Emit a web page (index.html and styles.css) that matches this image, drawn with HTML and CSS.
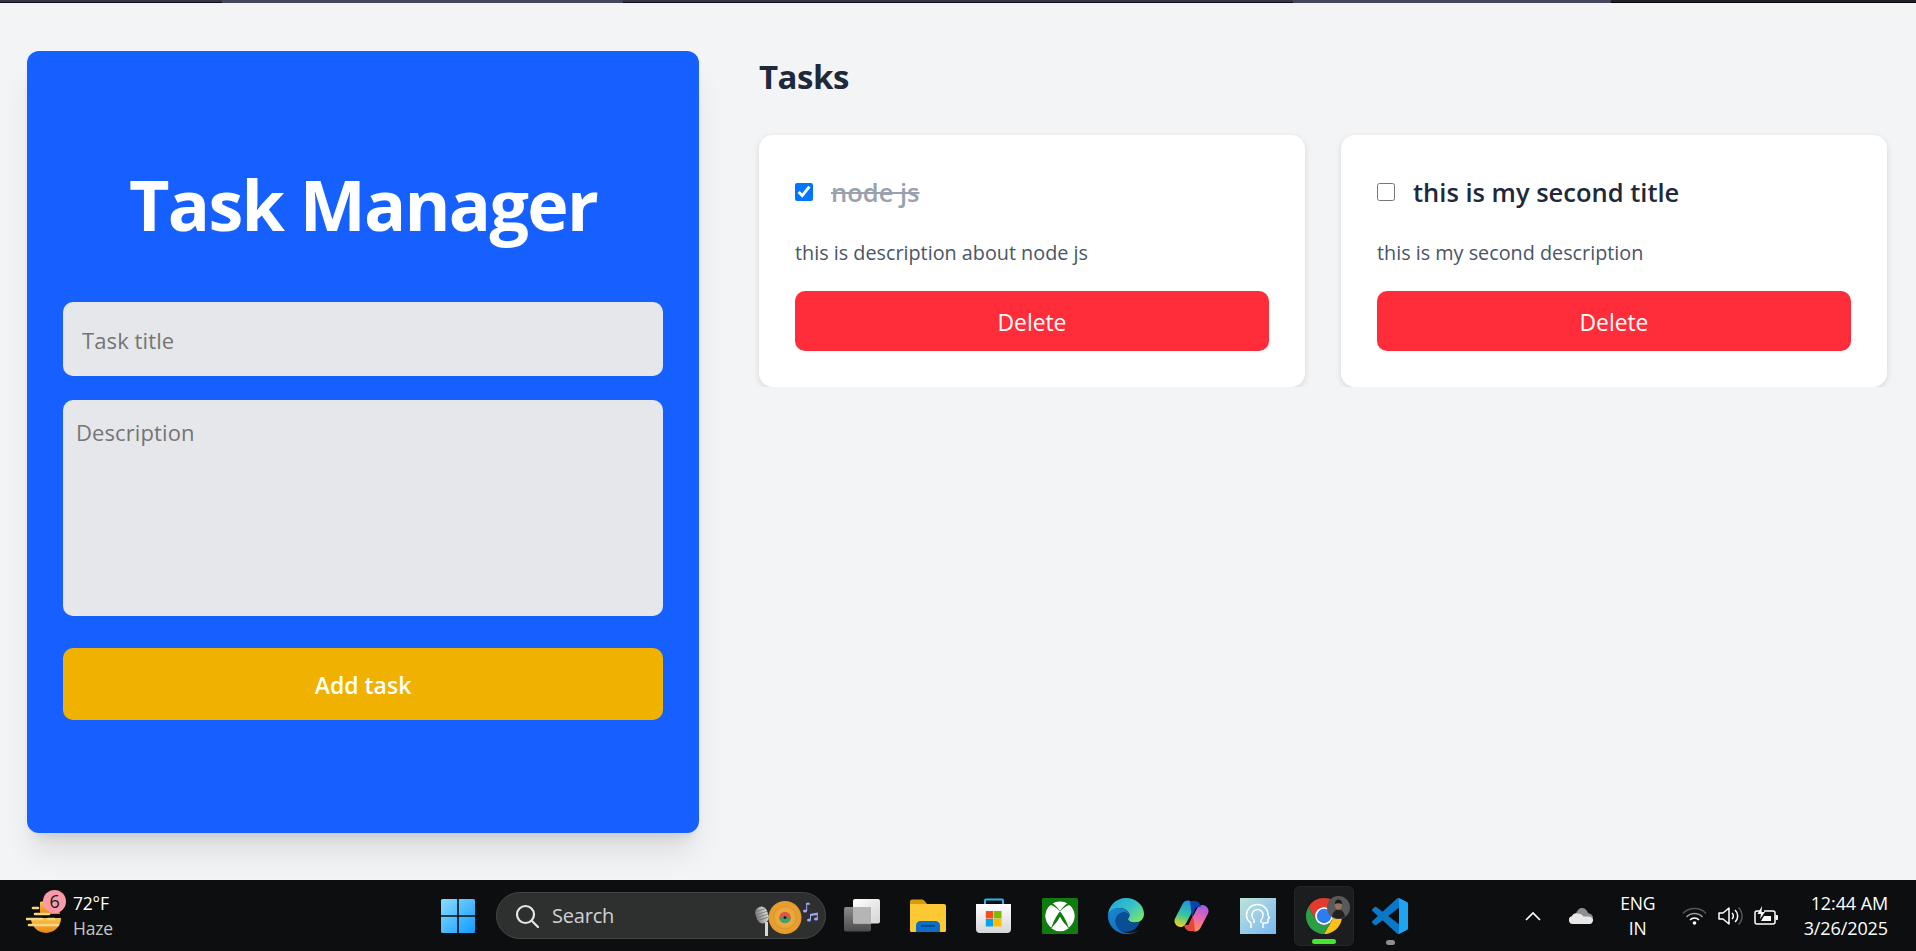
FILE: index.html
```html
<!DOCTYPE html>
<html lang="en">
<head>
<meta charset="UTF-8" />
<title>Task Manager</title>
<link rel="stylesheet" href="styles.css">
</head>
<body>

<div class="top-strip">
  <span class="strip-seg seg-a"></span>
  <span class="strip-seg seg-b seg-mark"></span>
  <span class="strip-seg seg-c"></span>
  <span class="strip-seg seg-b seg-d"></span>
  <span class="strip-seg seg-e"></span>
</div>

<div class="app">
  <aside class="sidebar">
    <h1>Task Manager</h1>
    <form class="task-form">
      <input type="text" placeholder="Task title" />
      <textarea placeholder="Description"></textarea>
      <button type="button" class="add-btn">Add task</button>
    </form>
  </aside>

  <main class="tasks">
    <h2>Tasks</h2>
    <div class="task-grid">
      <div class="task-card">
        <div class="task-head">
          <input type="checkbox" checked />
          <h3 class="done">node js</h3>
        </div>
        <p>this is description about node js</p>
        <button type="button" class="delete-btn">Delete</button>
      </div>
      <div class="task-card">
        <div class="task-head">
          <input type="checkbox" />
          <h3>this is my second title</h3>
        </div>
        <p>this is my second description</p>
        <button type="button" class="delete-btn">Delete</button>
      </div>
    </div>
  </main>
</div>

<footer class="taskbar">
  <div class="weather">
    <div class="weather-icon">
      <svg width="38" height="36" viewBox="0 0 38 36">
        <defs>
          <linearGradient id="sun" x1="0" y1="0" x2="0" y2="1">
            <stop offset="0" stop-color="#f7c64a"/>
            <stop offset="1" stop-color="#ee8413"/>
          </linearGradient>
        </defs>
        <path d="M5 20h30a15 15 0 0 1-30 0z" fill="url(#sun)"/>
        <path d="M14 4a15 15 0 0 1 20 12H14z" fill="url(#sun)"/>
        <g stroke="#f3d789" stroke-width="2.600" stroke-linecap="round">
          <path d="M7 10h5"/><path d="M9 16h14"/><path d="M1 21h15"/><path d="M22 21h6"/><path d="M3 27h29"/>
        </g>
      </svg>
      <span class="badge">6</span>
    </div>
    <div class="weather-text">
      <span>72°F</span>
      <span class="haze">Haze</span>
    </div>
  </div>

  <div class="apps">
    <div class="slot">
      <svg width="36" height="36" viewBox="0 0 36 36">
        <defs>
          <linearGradient id="win" x1="0" y1="0" x2="1" y2="1">
            <stop offset="0" stop-color="#8adcff"/>
            <stop offset="1" stop-color="#0f9bff"/>
          </linearGradient>
        </defs>
        <path d="M1 2.500A1.500 1.500 0 0 1 2.500 1H17.200v16.200H1zM18.800 1h14.700A1.500 1.500 0 0 1 35 2.500v14.700H18.800zM1 18.800h16.200V35H2.500A1.500 1.500 0 0 1 1 33.500zM18.800 18.800H35v14.700a1.500 1.500 0 0 1-1.500 1.500H18.800z" fill="url(#win)"/>
      </svg>
    </div>

    <div class="search-pill">
      <svg class="search-icon" width="24" height="24" viewBox="0 0 24 24" fill="none" stroke="#e6e6e6" stroke-width="2.200" stroke-linecap="round">
        <circle cx="10.500" cy="10.500" r="8.500"/><path d="M17 17l6 6"/>
      </svg>
      <span class="search-label">Search</span>
      <svg class="search-art" width="66" height="40" viewBox="0 0 66 40">
        <defs>
          <radialGradient id="disc">
            <stop offset="0" stop-color="#f4b54a"/>
            <stop offset="1" stop-color="#e39a2a"/>
          </radialGradient>
          <linearGradient id="mic" x1="0" y1="0" x2="1" y2="0">
            <stop offset="0" stop-color="#7d7d7d"/>
            <stop offset="1" stop-color="#e0e0e0"/>
          </linearGradient>
        </defs>
        <path d="M12 26h3v14h-3z" fill="#d6d6d6"/>
        <g transform="rotate(-18 9 19)">
          <rect x="3" y="10.500" width="12" height="17" rx="6" fill="url(#mic)"/>
          <path d="M3.500 14h11M3 17h12M3 20h12M3.500 23h11" stroke="#6c6c6c" stroke-width=".7"/>
        </g>
        <circle cx="32" cy="21.500" r="16.500" fill="url(#disc)"/>
        <circle cx="32" cy="21.500" r="11.500" fill="none" stroke="#d08a26" stroke-width=".6"/>
        <circle cx="32" cy="21.500" r="5.800" fill="#d9594a"/>
        <path d="M26.200 21.500h11.600a5.800 5.800 0 0 1-11.600 0z" fill="#3fa46c"/>
        <circle cx="32" cy="21.500" r="1.500" fill="#222"/>
        <g fill="#a2a8f2">
          <ellipse cx="52" cy="15" rx="2" ry="1.500"/>
          <path d="M53.200 7h1v8h-1z"/>
          <path d="M53.200 7c1.500-.5 2.500-.5 3.500 0v2c-1-.5-2-.5-3.500 0z"/>
          <ellipse cx="56" cy="24" rx="2" ry="1.500"/>
          <ellipse cx="63" cy="23" rx="2" ry="1.500"/>
          <path d="M57 18l7.800-1.500v6.500h-1v-4l-5.800 1.100V24h-1z"/>
        </g>
      </svg>
    </div>

    <div class="slot">
      <svg width="36" height="34" viewBox="0 0 36 34">
        <defs>
          <linearGradient id="tv-back" x1="0" y1="0" x2="0" y2="1">
            <stop offset="0" stop-color="#8a8a8a"/>
            <stop offset="1" stop-color="#4c4c4c"/>
          </linearGradient>
          <linearGradient id="tv-front" x1="0" y1="0" x2="1" y2="1">
            <stop offset="0" stop-color="#ffffff"/>
            <stop offset="1" stop-color="#d4d4d4"/>
          </linearGradient>
        </defs>
        <rect x="0" y="8" width="27" height="24.500" rx="2" fill="url(#tv-back)"/>
        <rect x="9" y="0" width="27" height="24.500" rx="2" fill="url(#tv-front)"/>
        <rect x="9" y="8" width="18" height="16.500" fill="#b5b5b5"/>
      </svg>
    </div>

    <div class="slot">
      <svg width="36" height="34" viewBox="0 0 36 34">
        <path d="M0 2.500A2 2 0 0 1 2 .500h10c1.500 0 2 .8 3 2l2.500 3H0z" fill="#d99a0a"/>
        <path d="M0 5h34a2 2 0 0 1 2 2v24.500a1.500 1.500 0 0 1-1.500 1.500h-33A1.500 1.500 0 0 1 0 31.500z" fill="#fcc934"/>
        <path d="M6 33v-6.500A4.500 4.500 0 0 1 10.500 22h15a4.500 4.500 0 0 1 4.500 4.500V33z" fill="#0c6ec4"/>
        <rect x="11" y="26" width="14" height="1.600" fill="#06447e"/>
      </svg>
    </div>

    <div class="slot">
      <svg width="36" height="36" viewBox="0 0 36 36">
        <defs>
          <linearGradient id="bag" x1="0" y1="0" x2="0" y2="1">
            <stop offset="0" stop-color="#ffffff"/>
            <stop offset="1" stop-color="#d6d6d6"/>
          </linearGradient>
        </defs>
        <path d="M9 7V2.500A1 1 0 0 1 10 1.500h16a1 1 0 0 1 1 1V7" fill="none" stroke="#29b6f6" stroke-width="2"/>
        <path d="M0 6h35v25a4 4 0 0 1-4 4H4a4 4 0 0 1-4-4z" fill="url(#bag)"/>
        <rect x="9.800" y="13" width="7.500" height="7.500" fill="#f25022"/>
        <rect x="18" y="13" width="7.500" height="7.500" fill="#7fba00"/>
        <rect x="9.800" y="21" width="7.500" height="7.500" fill="#00a4ef"/>
        <rect x="18" y="21" width="7.500" height="7.500" fill="#ffb900"/>
      </svg>
    </div>

    <div class="slot">
      <svg width="36" height="36" viewBox="0 0 36 36">
        <rect width="36" height="36" rx="1.500" fill="#107c10"/>
        <circle cx="18" cy="18" r="14.500" fill="#fff"/>
        <path d="M7 5c5 2 15 13 19 28M29 5C24 7 14 18 10 33" fill="none" stroke="#107c10" stroke-width="3.200"/>
        <path d="M18 21c3 2.500 7 7 8.500 9.500a14.500 14.500 0 0 1-17 0C11 28 15 23.500 18 21z" fill="#fff"/>
        <path d="M3.500 18A14.500 14.500 0 0 1 9 7c3 1 6 3.500 9 6.500-4 4-8 9-10 13-2-2.500-4.500-5-4.500-8.500z" fill="#fff"/>
        <path d="M32.500 18A14.500 14.500 0 0 0 27 7c-3 1-6 3.500-9 6.500 4 4 8 9 10 13 2-2.500 4.500-5 4.500-8.500z" fill="#fff"/>
      </svg>
    </div>

    <div class="slot">
      <svg width="36" height="36" viewBox="0 0 36 36">
        <defs>
          <linearGradient id="edge-top" x1="0" y1="0" x2="1" y2=".8">
            <stop offset="0" stop-color="#1fa3dc"/>
            <stop offset=".55" stop-color="#35c1c8"/>
            <stop offset="1" stop-color="#7ee66a"/>
          </linearGradient>
          <linearGradient id="edge-low" x1="0" y1="0" x2="1" y2="1">
            <stop offset="0" stop-color="#1a8ad8"/>
            <stop offset="1" stop-color="#0c5fa8"/>
          </linearGradient>
        </defs>
        <path d="M18 0c10 0 18 7 18 16 0 5-4 8.500-9 8.500-4 0-7-1.500-7-3.500 0-1 1.500-2 1.500-4 0-3-4-7-10-7C5.500 10 0 14 0 18 0 8 8 0 18 0z" fill="url(#edge-top)"/>
        <path d="M0 18c0-5 5.500-8 11-8 6 0 10.500 4 10.500 7-2-2-5-3-8-2-5 1.500-7 7-5 12 2 5 7 8 12 8 4 0 8-1 11-3-3.500 2.600-7.500 4-13 4C8 36 0 28 0 18z" fill="url(#edge-low)"/>
        <path d="M21.500 17c0 1.500-1.500 3-1.500 4 0 2 3 3.500 7 3.500 3 0 3.500 0 5-1-2.500 7-8 10.500-14 10.500-5 0-8-3-9.500-6.500-2-5 0-11 5-12.500 3-1 6 0 8 2z" fill="#0a4f96"/>
      </svg>
    </div>

    <div class="slot">
      <svg width="36" height="32" viewBox="0 0 36 32">
        <defs>
          <linearGradient id="cop-l" gradientUnits="userSpaceOnUse" x1="15" y1="0" x2="6" y2="27">
            <stop offset="0" stop-color="#1c8fe8"/>
            <stop offset=".55" stop-color="#35c6a0"/>
            <stop offset="1" stop-color="#f2d21e"/>
          </linearGradient>
          <linearGradient id="cop-r" gradientUnits="userSpaceOnUse" x1="29" y1="5" x2="20" y2="32">
            <stop offset="0" stop-color="#a35be8"/>
            <stop offset=".55" stop-color="#f06aa8"/>
            <stop offset="1" stop-color="#fb9a3c"/>
          </linearGradient>
        </defs>
        <path d="M14 6.500L6.500 21" stroke="url(#cop-l)" stroke-width="12" stroke-linecap="round"/>
        <path d="M28.500 11L21 25.500" stroke="url(#cop-r)" stroke-width="12" stroke-linecap="round"/>
        <path d="M16 1h5c3 0 5 2 6 6h-3c-2 0-2.500 1-3.200 3L18 17z" fill="#0c3fb0"/>
        <path d="M21 31h-5c-3 0-5-2-6-6h3c2 0 2.500-1 3.200-3L19 15z" fill="#e8453c"/>
      </svg>
    </div>

    <div class="slot">
      <svg width="36" height="36" viewBox="0 0 36 36">
        <defs>
          <linearGradient id="head-bg" x1="0" y1="0" x2="1" y2="1">
            <stop offset="0" stop-color="#bde3da"/>
            <stop offset="1" stop-color="#78b7f2"/>
          </linearGradient>
        </defs>
        <rect width="36" height="36" fill="url(#head-bg)"/>
        <g fill="none" stroke="#fff" stroke-width="1.500" stroke-linejoin="round">
          <path d="M11 30v-5c-3-2-4.500-5-4.500-8 0-6 5-10.500 11-10.500s10.500 4.500 10.500 10c0 1 .5 2 1.500 3.500l-1.500 1v2.500c0 1-1 1.500-2 1.500h-3v5"/>
          <path d="M14 25v-3c-1.500-1-2-3-2-5 0-3 2.500-5.500 5.500-5.500S23 14 23 17c0 2-.5 4-2 5v3"/>
        </g>
      </svg>
    </div>

    <div class="slot slot-active">
      <svg width="36" height="36" viewBox="0 0 44 44">
        <path d="M22 0A22 22 0 0 1 41.050 11H22A11 11 0 0 0 12.470 27.500L2.950 11A22 22 0 0 1 22 0z" fill="#e33b2e"/>
        <path d="M41.050 11H22A11 11 0 0 1 31.530 27.500L22 44A22 22 0 0 0 41.050 11z" fill="#fbc116"/>
        <path d="M2.950 11L12.470 27.500A11 11 0 0 0 31.530 27.500L22 44A22 22 0 0 1 2.950 11z" fill="#2b9f46"/>
        <circle cx="22" cy="22" r="11" fill="#fff"/>
        <circle cx="22" cy="22" r="8.800" fill="#2f7bf0"/>
      </svg>
      <span class="avatar">
        <svg width="23" height="23" viewBox="0 0 23 23">
          <circle cx="11.500" cy="11.500" r="11.500" fill="#595959"/>
          <path d="M5 20.500c1-5 3.500-7 6.500-7s5.500 2 6.500 7a11.500 11.500 0 0 1-13 0z" fill="#232221"/>
          <ellipse cx="11.500" cy="9.500" rx="3.400" ry="4.200" fill="#94765f"/>
          <path d="M7.800 8c0-3 1.800-4.500 3.700-4.500s3.700 1.500 3.700 4.500c-2-1-5.400-1-7.400 0z" fill="#1a1a1a"/>
        </svg>
      </span>
      <span class="run-pill run-green"></span>
    </div>

    <div class="slot">
      <svg width="36" height="36" viewBox="0 0 24 24">
        <path d="M23.150 2.587L18.210.210a1.494 1.494 0 0 0-1.705.290l-9.460 8.630-4.120-3.128a.999.999 0 0 0-1.276.057L.327 7.261A1 1 0 0 0 .326 8.740L3.899 12 .326 15.260a1 1 0 0 0 .001 1.479L1.650 17.940a.999.999 0 0 0 1.276.057l4.120-3.128 9.460 8.630a1.492 1.492 0 0 0 1.704.290l4.942-2.377A1.500 1.500 0 0 0 24 20.060V3.939a1.500 1.500 0 0 0-.85-1.352zm-5.146 14.861L10.826 12l7.178-5.448v10.896z" fill="#0a78c8"/>
        <path d="M18 .1l.21.110 4.940 2.377A1.500 1.500 0 0 1 24 3.939V20.060a1.500 1.500 0 0 1-.85 1.352l-4.940 2.377-.21.110z" fill="#1fa4f2"/>
      </svg>
      <span class="run-pill run-gray"></span>
    </div>
  </div>

  <div class="tray">
    <svg class="tray-caret" width="16" height="10" viewBox="0 0 16 10" fill="none" stroke="#fff" stroke-width="1.700">
      <path d="M1 9l7-7 7 7"/>
    </svg>
    <svg class="tray-cloud" width="24" height="16" viewBox="0 0 24 16">
      <path d="M7 5.500C8 2 10.500 0 13 0c3 0 5 2 6 5 3 .5 5 2.500 5 5H7z" fill="#8f8f8f"/>
      <path d="M4 16a4 4 0 0 1-1-7.900C4 6 6 5 8 5.500c2-.5 5 .5 6.500 3 4 0 8.500-.5 9.500 2.500.5 2-1 5-3 5z" fill="#e8e8e8"/>
    </svg>
    <div class="lang"><span>ENG</span><span>IN</span></div>
    <div class="status-icons">
      <svg width="25" height="18" viewBox="0 0 25 18" fill="none" stroke-width="1.500">
        <path d="M1 6.500a16 16 0 0 1 23 0" stroke="#555"/>
        <path d="M4.500 10a11 11 0 0 1 16 0" stroke="#999"/>
        <path d="M8 13a6 6 0 0 1 9 0" stroke="#fff"/>
        <circle cx="12.500" cy="16" r="1.800" fill="#fff"/>
      </svg>
      <svg width="25" height="20" viewBox="0 0 25 20" fill="none" stroke-width="1.500">
        <path d="M1 7h4l6-5v16l-6-5H1z" stroke="#fff" stroke-linejoin="round"/>
        <path d="M14 7a4 4 0 0 1 0 6" stroke="#fff"/>
        <path d="M17 4a8 8 0 0 1 0 12" stroke="#fff"/>
        <path d="M20.500 1.500a12 12 0 0 1 0 17" stroke="#555"/>
      </svg>
      <svg width="24" height="20" viewBox="0 0 24 20" fill="none">
        <path d="M6 5H3a2 2 0 0 0-2 2v9a2 2 0 0 0 2 2h16a2 2 0 0 0 2-2V7a2 2 0 0 0-2-2H10" stroke="#fff" stroke-width="1.500"/>
        <path d="M8 0L3.500 8H7l-1 5 5-7H7.500z" fill="#fff"/>
        <path d="M7 15l3-5h7v5z" fill="#fff"/>
        <rect x="21.500" y="9" width="2.500" height="5" rx="1" fill="#fff"/>
      </svg>
    </div>
    <div class="clock"><span>12:44 AM</span><span>3/26/2025</span></div>
  </div>
</footer>

</body>
</html>
```

FILE: styles.css
```css
/* Reset */
*, *::before, *::after {
  box-sizing: border-box;
  margin: 0; padding: 0;
}
html, body {
  height: 100%;
  overflow: hidden;
}
:root {
  --bg: #f3f4f6;
  --blue: #1660ff;
  --gold: #f0b100;
  --red: #ff2d3a;
  --field: #e5e7eb;
  --ink: #1e2939;
  --muted: #4a5565;
}
body {
  display: flex;
  flex-direction: column;
  font-family: 'Open Sans', 'Noto Sans', sans-serif;
  background: var(--bg);
  color: var(--ink);
}

/* sliver of the window above the page */
.top-strip {
  display: flex;
  height: 3px;
  flex: none;
}
.strip-seg {
  display: block;
  background: linear-gradient(#34344a 0 66%, #0c0c12 66%);
}
.seg-a { width: 222px; }
.seg-b { width: 401px; background: #43465c; }
.seg-mark {
  border-left: 3px solid #43465c;
  border-image: linear-gradient(#43465c 0 66%, #c8d4ff 66%) 1;
}
.seg-c { width: 670px; }
.seg-d { width: 318px; }
.seg-e { flex: 1; background: linear-gradient(#20202a 0 66%, #08080c 66%); }

/* page */
.app {
  flex: 1;
  display: flex;
  gap: 60px;
  padding: 48px 29px 47px 27px;
}
.sidebar {
  width: 672px;
  flex: none;
  display: flex;
  flex-direction: column;
  justify-content: center;
  padding: 0 36px;
  background: var(--blue);
  border-radius: 12px;
  box-shadow: 0 24px 30px -6px rgba(0, 0, 0, 0.1), 0 10px 12px -7px rgba(0, 0, 0, 0.1);
}
.sidebar h1 {
  font-size: 70px;
  line-height: 80px;
  font-weight: 700;
  letter-spacing: -1.700px;
  color: #fff;
  text-align: center;
  margin-bottom: 58px;
}
.task-form {
  display: flex;
  flex-direction: column;
  gap: 24px;
}
.task-form input,
.task-form textarea {
  display: block;
  width: 100%;
  border: none;
  outline: none;
  resize: none;
  border-radius: 10px;
  background: var(--field);
  font-family: inherit;
  font-size: 22px;
  letter-spacing: 0.100px;
}
.task-form input {
  height: 74px;
  padding: 2px 19px 0;
}
.task-form textarea {
  height: 216px;
  padding: 17px 13px;
}
.task-form ::placeholder {
  color: #757575;
}
.add-btn {
  height: 72px;
  margin-top: 8px;
  padding-top: 1px;
  border: none;
  border-radius: 10px;
  background: var(--gold);
  color: #fff;
  font-family: inherit;
  font-size: 23px;
  font-weight: 600;
}

.tasks {
  flex: 1;
  min-width: 0;
}
.tasks h2 {
  font-size: 33px;
  line-height: 52px;
  font-weight: 700;
  letter-spacing: -0.500px;
  margin-bottom: 32px;
}
.task-grid {
  display: grid;
  grid-template-columns: 1fr 1fr;
  gap: 36px;
}
.task-card {
  height: 252px;
  padding: 36px;
  background: #fff;
  border-radius: 14px;
  box-shadow: 0 2px 6px rgba(0, 0, 0, 0.12);
  clip-path: inset(-10px -10px 0 -10px);
}
.task-head {
  display: flex;
  align-items: center;
  gap: 18px;
  height: 42px;
}
.task-head input {
  width: 18px;
  height: 18px;
  margin: 0;
  flex: none;
}
.task-head h3 {
  font-size: 25.500px;
  font-weight: 600;
}
.task-head h3.done {
  color: #99a1af;
  text-decoration: line-through;
}
.task-card p {
  margin-top: 26px;
  font-size: 19.800px;
  line-height: 28px;
  color: var(--muted);
}
.delete-btn {
  display: block;
  width: 100%;
  height: 60px;
  margin-top: 24px;
  padding-top: 3px;
  border: none;
  border-radius: 10px;
  background: var(--red);
  color: #fff;
  font-family: inherit;
  font-size: 22.800px;
}

/* windows taskbar */
.taskbar {
  height: 71px;
  flex: none;
  display: flex;
  align-items: center;
  background: #0c0e0f;
  color: #fff;
  font-size: 17.500px;
  letter-spacing: -0.200px;
}
.weather {
  width: 425px;
  flex: none;
  display: flex;
  align-items: center;
  gap: 9px;
  padding-left: 26px;
}
.weather-icon {
  position: relative;
  width: 38px;
  height: 36px;
}
.weather-icon svg {
  display: block;
}
.badge {
  position: absolute;
  top: -8px;
  left: 17px;
  width: 23px;
  height: 23px;
  border-radius: 50%;
  background: #f99aa6;
  color: #1a1a1a;
  text-align: center;
  line-height: 23px;
  font-size: 18px;
}
.weather-text,
.lang,
.clock {
  display: flex;
  flex-direction: column;
  line-height: 25px;
}
.haze {
  color: #c6c6c6;
}
.apps {
  display: flex;
  align-items: center;
}
.slot {
  position: relative;
  width: 66px;
  height: 60px;
  display: flex;
  align-items: center;
  justify-content: center;
}
.slot-active {
  width: 60px;
  margin: 0 3px;
  background: #1c1d1e;
  border: 1px solid #262728;
  border-radius: 6px;
}
.avatar {
  position: absolute;
  top: 9px;
  left: 32px;
  height: 23px;
}
.run-pill {
  position: absolute;
  bottom: 1px;
  height: 5px;
  border-radius: 3px;
}
.run-green {
  width: 24px;
  background: #45e62f;
}
.run-gray {
  width: 9px;
  background: #8e8e8e;
}
.search-pill {
  width: 330px;
  height: 47px;
  margin: 0 3px 0 5px;
  display: flex;
  align-items: center;
  padding-left: 18px;
  border-radius: 24px;
  background: #2e2f2f;
  border: 1px solid #454646;
  overflow: hidden;
}
.search-icon {
  flex: none;
}
.search-label {
  margin-left: 13px;
  font-size: 20px;
  color: #d2d2d2;
}
.search-art {
  flex: none;
  margin-left: auto;
  margin-right: 6px;
}
.tray {
  margin-left: auto;
  padding-right: 28px;
  display: flex;
  align-items: center;
}
.tray-caret { margin-right: 28px; }
.tray-cloud { margin-right: 27px; }
.lang {
  align-items: center;
  width: 36px;
  margin-right: 26px;
}
.status-icons {
  display: flex;
  align-items: center;
  gap: 11px;
  margin-right: 26px;
}
.clock {
  align-items: flex-end;
  font-size: 18px;
  letter-spacing: -0.100px;
}
```
